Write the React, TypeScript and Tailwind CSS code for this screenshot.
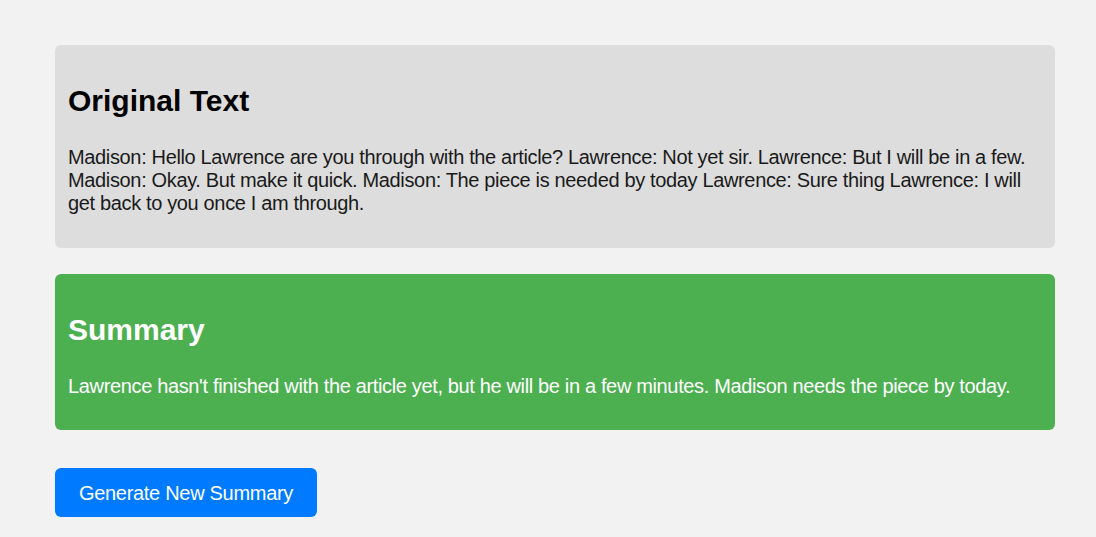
export default function App() {
  return (
    <div className="min-h-screen bg-[#f2f2f2] pl-[55px] pr-[41px] pt-[45px] font-['Liberation_Sans',Arial,sans-serif]">
      <div className="flex w-[1000px] flex-col gap-[26px]">
        {/* Original text */}
        <section className="rounded-[6px] bg-[#dddddd] px-[13px] pt-[13px] pb-[13px]">
          <h2 className="mt-[26px] mb-[28px] text-[30px] leading-[34px] font-bold text-black">Original Text</h2>
          <p className="mb-[20px] text-[20px] leading-[23px] tracking-[-0.35px] text-[#1a1a1a]">
            Madison: Hello Lawrence are you through with the article? Lawrence: Not yet sir. Lawrence: But I will be in a few.
            Madison: Okay. But make it quick. Madison: The piece is needed by today Lawrence: Sure thing Lawrence: I will get
            back to you once I am through.
          </p>
        </section>

        {/* Summary */}
        <section className="rounded-[6px] bg-[#4caf50] px-[13px] pt-[13px] pb-[12px] text-white">
          <h2 className="mt-[26px] mb-[28px] text-[30px] leading-[34px] font-bold">Summary</h2>
          <p className="mb-[20px] text-[20px] leading-[23px] tracking-[-0.35px]">
            Lawrence hasn't finished with the article yet, but he will be in a few minutes. Madison needs the piece by today.
          </p>
        </section>
      </div>

      <button className="mt-[38px] flex h-[49px] w-[262px] items-center justify-center rounded-[6px] bg-[#007bff] text-[20px] tracking-[-0.3px] text-white">
        Generate New Summary
      </button>
    </div>
  );
}
